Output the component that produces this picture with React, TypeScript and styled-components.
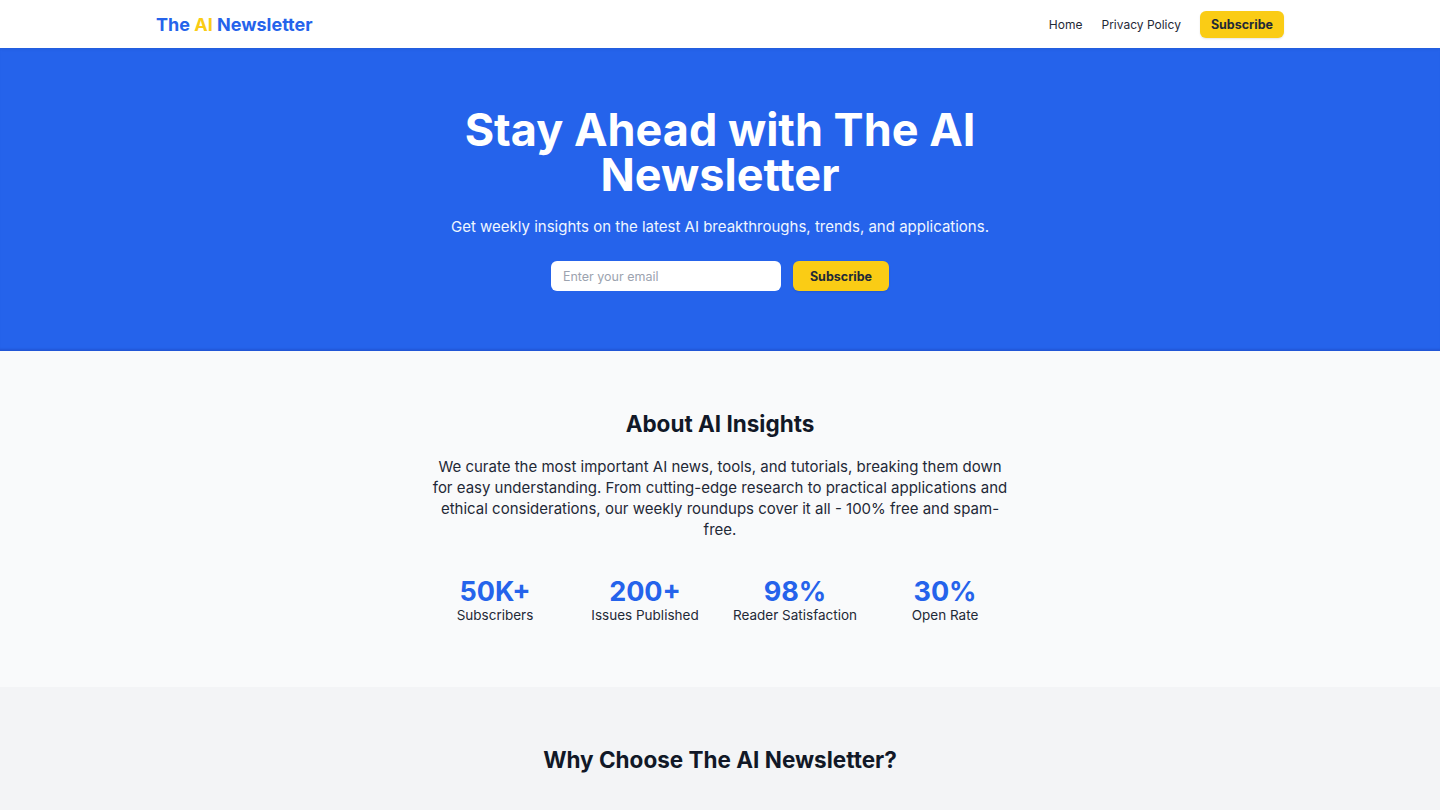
import React from 'react'
import styled, { createGlobalStyle } from 'styled-components'

const GlobalStyle = createGlobalStyle`
  * { box-sizing: border-box; }
  body {
    margin: 0;
    font-family: Inter, "Noto Sans", "Liberation Sans", sans-serif;
    color: #111827;
    background: #ffffff;
  }
`

const Container = styled.div`
  max-width: 1152px;
  margin: 0 auto;
  padding: 0 12px;
`

const Header = styled.header`
  background: #ffffff;
  box-shadow: 0 1px 3px rgba(0, 0, 0, 0.08);
  position: relative;
  z-index: 1;
`

const HeaderInner = styled(Container)`
  height: 48px;
  display: flex;
  align-items: center;
  justify-content: space-between;
`

const Logo = styled.a`
  font-size: 18px;
  font-weight: 700;
  color: #2563eb;
  text-decoration: none;
  span { color: #facc15; }
`

const Nav = styled.nav`
  display: flex;
  align-items: center;
  gap: 19px;
`

const NavLink = styled.a`
  font-size: 12px;
  color: #1f2937;
  text-decoration: none;
`

const YellowButton = styled.button<{ $size?: 'sm' | 'md' }>`
  background: #facc15;
  color: #1f2937;
  border: none;
  border-radius: 6px;
  font-family: inherit;
  font-weight: 700;
  font-size: 12.5px;
  height: ${({ $size }) => ($size === 'sm' ? '27px' : '30px')};
  padding: 0 ${({ $size }) => ($size === 'sm' ? '11px' : '17px')};
  cursor: pointer;
  box-shadow: 0 1px 2px rgba(0, 0, 0, 0.1);
`

const Hero = styled.section`
  background: #2563eb;
  color: #ffffff;
  padding: 59px 0 60px;
  text-align: center;
  box-shadow: inset 0 -3px 2px -1px rgba(30, 64, 175, 0.35);
`

const HeroTitle = styled.h1`
  font-size: 45px;
  line-height: 45px;
  font-weight: 700;
  max-width: 672px;
  margin: 0 auto 20px;
`

const HeroText = styled.p`
  font-size: 15px;
  margin: 0 0 25px;
  color: #eff6ff;
`

const Form = styled.form`
  display: flex;
  justify-content: center;
  gap: 12px;
`

const EmailInput = styled.input`
  width: 230px;
  height: 30px;
  border: none;
  border-radius: 6px;
  padding: 0 12px;
  font-family: inherit;
  font-size: 12.5px;
  &::placeholder { color: #9ca3af; }
`

const Section = styled.section<{ $bg: string }>`
  background: ${({ $bg }) => $bg};
  padding: 59px 0 64px;
  text-align: center;
`

const SectionTitle = styled.h2`
  font-size: 22.5px;
  font-weight: 700;
  margin: 0 0 19px;
  color: #111827;
`

const AboutText = styled.p`
  max-width: 576px;
  margin: 0 auto 37px;
  font-size: 15px;
  line-height: 21px;
  color: #1f2937;
`

const Stats = styled.div`
  display: grid;
  grid-template-columns: repeat(4, 150px);
  justify-content: center;
`

const Stat = styled.div`
  display: flex;
  flex-direction: column;
  align-items: center;
`

const StatValue = styled.div`
  font-size: 27px;
  line-height: 30px;
  font-weight: 700;
  color: #2563eb;
`

const StatLabel = styled.div`
  font-size: 13.5px;
  color: #1f2937;
`

const stats = [
  { value: '50K+', label: 'Subscribers' },
  { value: '200+', label: 'Issues Published' },
  { value: '98%', label: 'Reader Satisfaction' },
  { value: '30%', label: 'Open Rate' },
]

export default function App() {
  return (
    <>
      <GlobalStyle />
      <Header>
        <HeaderInner>
          <Logo href="#">
            The <span>AI</span> Newsletter
          </Logo>
          <Nav>
            <NavLink href="#">Home</NavLink>
            <NavLink href="#">Privacy Policy</NavLink>
            <YellowButton $size="sm">Subscribe</YellowButton>
          </Nav>
        </HeaderInner>
      </Header>
      <Hero>
        <Container>
          <HeroTitle>Stay Ahead with The AI Newsletter</HeroTitle>
          <HeroText>Get weekly insights on the latest AI breakthroughs, trends, and applications.</HeroText>
          <Form onSubmit={(e) => e.preventDefault()}>
            <EmailInput type="email" placeholder="Enter your email" />
            <YellowButton>Subscribe</YellowButton>
          </Form>
        </Container>
      </Hero>
      <Section $bg="#f9fafb">
        <Container>
          <SectionTitle>About AI Insights</SectionTitle>
          <AboutText>
            We curate the most important AI news, tools, and tutorials, breaking them down for easy
            understanding. From cutting-edge research to practical applications and ethical
            considerations, our weekly roundups cover it all - 100% free and spam-free.
          </AboutText>
          <Stats>
            {stats.map((s) => (
              <Stat key={s.label}>
                <StatValue>{s.value}</StatValue>
                <StatLabel>{s.label}</StatLabel>
              </Stat>
            ))}
          </Stats>
        </Container>
      </Section>
      <Section $bg="#f3f4f6">
        <Container>
          <SectionTitle>Why Choose The AI Newsletter?</SectionTitle>
        </Container>
      </Section>
    </>
  )
}
